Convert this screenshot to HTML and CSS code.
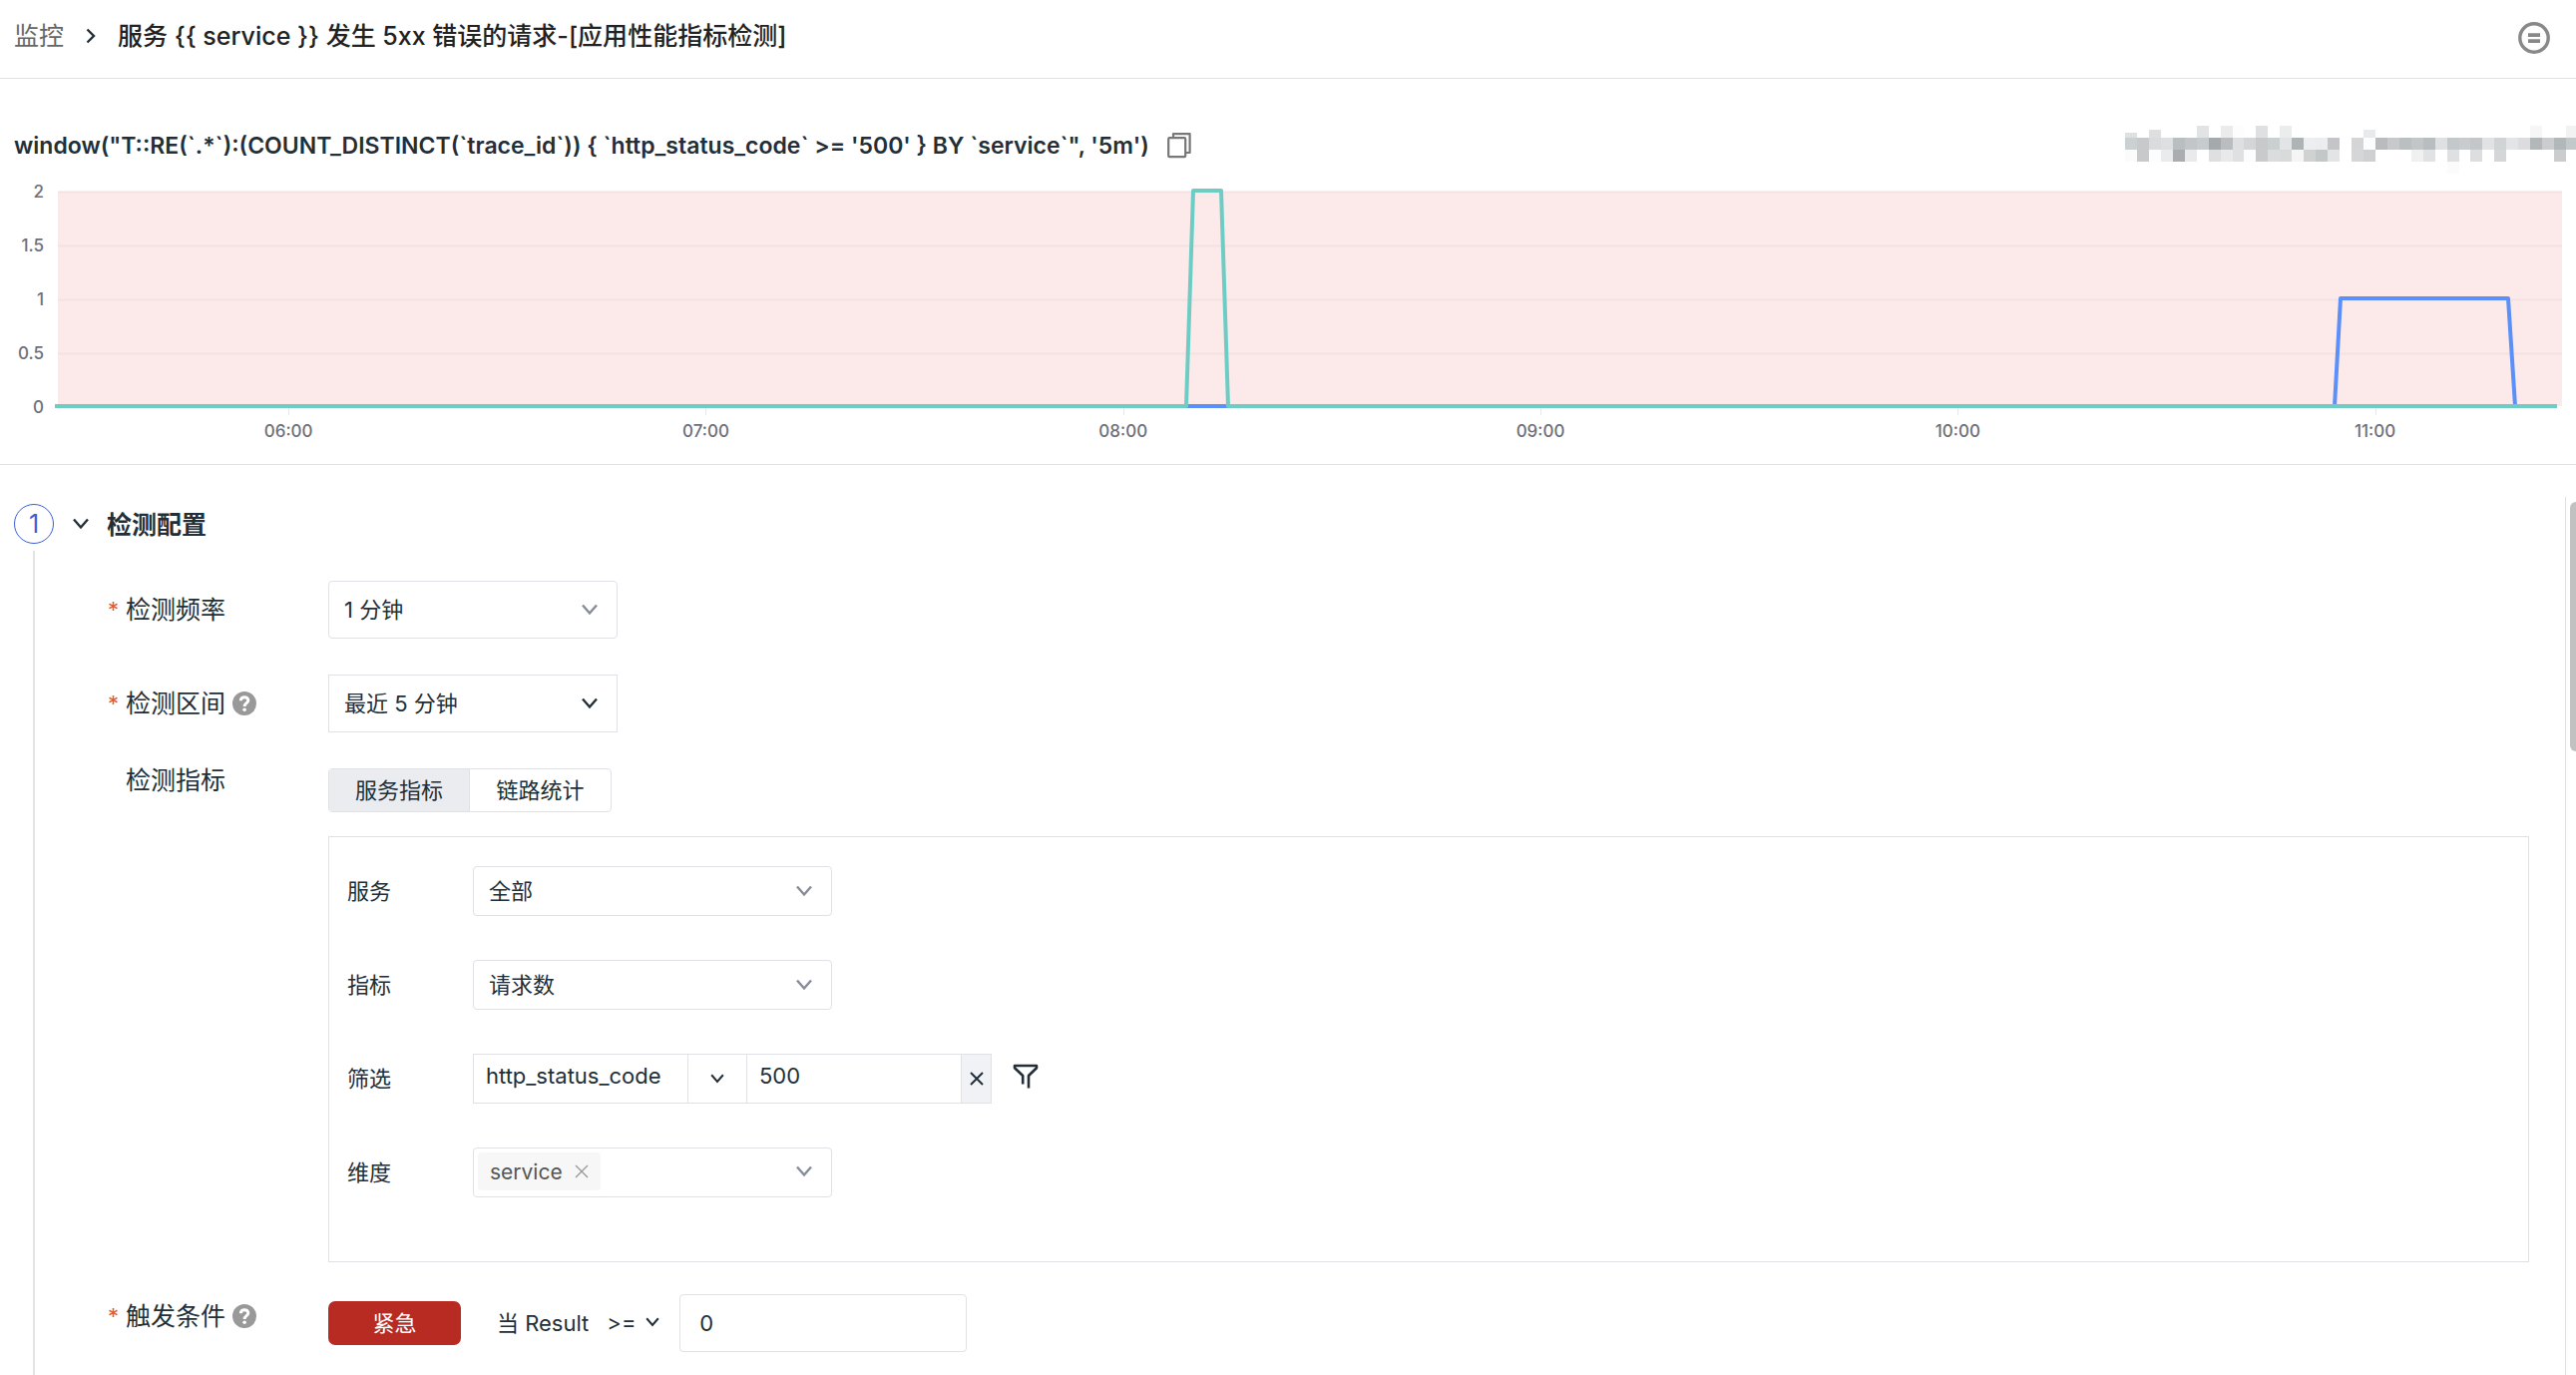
FILE: index.html
```
<!DOCTYPE html>
<html lang="zh-CN">
<head>
    <meta charset="UTF-8">
    <meta name="viewport" content="width=device-width, initial-scale=1.0">
    <title>监控</title>
    <link rel="stylesheet" href="styles.css">
</head>
<body>

<!-- shared icons -->
<svg class="sprite" aria-hidden="true">
    <symbol id="chevron" viewBox="0 0 16 12">
        <path d="M1 1.5 L8 9.5 L15 1.5" fill="none" stroke="currentColor" stroke-width="2.4"/>
    </symbol>
    <symbol id="help" viewBox="0 0 24 24">
        <circle cx="12" cy="12" r="12" fill="#999"/>
        <path d="M8.3 9.2 C8.3 4.4 15.9 4.6 15.8 9 C15.7 11.8 12.1 11.6 12.1 15" fill="none" stroke="#fff" stroke-width="3"/>
        <circle cx="12.1" cy="18.3" r="1.8" fill="#fff"/>
    </symbol>
    <symbol id="cross" viewBox="0 0 14 14">
        <path d="M1 1 L13 13 M13 1 L1 13" fill="none" stroke="currentColor" stroke-width="2"/>
    </symbol>
    <symbol id="cross-thin" viewBox="0 0 14 14">
        <path d="M1 1 L13 13 M13 1 L1 13" fill="none" stroke="currentColor" stroke-width="1.4"/>
    </symbol>
</svg>

<header class="topbar">
    <nav class="breadcrumb">
        <a href="#">监控</a>
        <svg class="breadcrumb-arrow" viewBox="0 0 10 16"><path d="M1.5 1.5 L8 8 L1.5 14.5" fill="none" stroke="currentColor" stroke-width="2.4"/></svg>
        <h1>服务 {{ service }} 发生 5xx 错误的请求-[应用性能指标检测]</h1>
    </nav>
    <button type="button" class="icon-button" aria-label="菜单">
        <svg width="32" height="32" viewBox="0 0 32 32">
            <circle cx="16" cy="16" r="14.2" fill="none" stroke="#888" stroke-width="3.4"/>
            <path d="M10 11.3 H22 V15 H10 Z M10 17.3 H22 V21 H10 Z" fill="#888"/>
        </svg>
    </button>
</header>

<section class="preview">
    <div class="query">
        <code>window("T::RE(`.*`):(COUNT_DISTINCT(`trace_id`)) { `http_status_code` &gt;= '500' } BY `service`", '5m')</code>
        <button type="button" class="icon-button" aria-label="复制">
            <svg width="24" height="26" viewBox="0 0 24 26">
                <g fill="none" stroke="#777" stroke-width="2.2" stroke-linejoin="round">
                    <rect x="1.2" y="5.2" width="17" height="19" rx="1"/>
                    <path d="M6 5 V1.2 H22.6 V20 H18.4"/>
                </g>
            </svg>
        </button>
        <svg class="mosaic" id="mosaic" viewBox="0 0 454 48" preserveAspectRatio="none" shape-rendering="crispEdges"></svg>
    </div>

    <svg class="chart" id="chart">
        <g class="y-axis">
            <text x="44" y="32">2</text>
            <text x="44" y="86">1.5</text>
            <text x="44" y="140">1</text>
            <text x="44" y="194">0.5</text>
            <text x="44" y="248">0</text>
        </g>
        <svg x="0" y="0" width="100%" height="270" viewBox="0 0 2582 270" preserveAspectRatio="none">
            <rect x="58" y="26" width="2510" height="215" class="area"/>
            <path d="M58 26.5 H2568 M58 80.5 H2568 M58 134.5 H2568 M58 188.5 H2568" class="grid"/>
            <path d="M289.5 242 V250 M707.5 242 V250 M1126.5 242 V250 M1544.5 242 V250 M1962.5 242 V250 M2381.5 242 V250" class="tick"/>
            <path d="M55 241 H2340 L2346 133 H2514 L2521 241 H2563" class="line blue"/>
            <path d="M55 241 H1189 L1196 25 H1224 L1231 241 H2563" class="line green"/>
        </svg>
        <g class="x-axis">
            <text x="11.2%" y="272">06:00</text>
            <text x="27.4%" y="272">07:00</text>
            <text x="43.6%" y="272">08:00</text>
            <text x="59.8%" y="272">09:00</text>
            <text x="76%" y="272">10:00</text>
            <text x="92.2%" y="272">11:00</text>
        </g>
    </svg>
</section>

<main class="config">
    <div class="step">
        <div class="rail">
            <span class="step-number">1</span>
            <span class="rail-line"></span>
        </div>

        <form class="step-body">
            <div class="step-title">
                <svg class="chevron"><use href="#chevron"/></svg>
                <h2>检测配置</h2>
            </div>

            <div class="form-row">
                <label for="frequency" class="form-label required">检测频率</label>
                <div class="select select-wide rounded">
                    <select id="frequency"><option>1 分钟</option></select>
                    <svg class="chevron muted"><use href="#chevron"/></svg>
                </div>
            </div>

            <div class="form-row">
                <label for="range" class="form-label required">检测区间<svg class="help"><use href="#help"/></svg></label>
                <div class="select select-wide">
                    <select id="range"><option>最近 5 分钟</option></select>
                    <svg class="chevron"><use href="#chevron"/></svg>
                </div>
            </div>

            <div class="form-row metric-row">
                <span class="form-label">检测指标</span>
                <div class="metric">
                    <div class="tabs">
                        <button type="button" class="active">服务指标</button>
                        <button type="button">链路统计</button>
                    </div>
                    <div class="panel">
                        <div class="panel-row">
                            <label for="service">服务</label>
                            <div class="select rounded">
                                <select id="service"><option>全部</option></select>
                                <svg class="chevron muted"><use href="#chevron"/></svg>
                            </div>
                        </div>
                        <div class="panel-row">
                            <label for="metric">指标</label>
                            <div class="select rounded">
                                <select id="metric"><option>请求数</option></select>
                                <svg class="chevron muted"><use href="#chevron"/></svg>
                            </div>
                        </div>
                        <div class="panel-row">
                            <label for="filterKey">筛选</label>
                            <div class="filter">
                                <input type="text" id="filterKey" value="http_status_code">
                                <button type="button" class="filter-op" aria-label="运算符"><svg class="chevron small"><use href="#chevron"/></svg></button>
                                <input type="text" value="500" aria-label="筛选值">
                                <button type="button" class="filter-remove" aria-label="删除"><svg class="cross"><use href="#cross"/></svg></button>
                            </div>
                            <button type="button" class="icon-button funnel" aria-label="添加筛选">
                                <svg width="26" height="26" viewBox="0 0 26 26">
                                    <path d="M10.2 20.5 V12 L2 4.2 V2 H24 V4.2 L16 12 V24.5" fill="none" stroke="#222f38" stroke-width="2.6" stroke-linejoin="round"/>
                                </svg>
                            </button>
                        </div>
                        <div class="panel-row">
                            <label for="dimension">维度</label>
                            <div class="tag-select">
                                <span class="tag">service<button type="button" aria-label="移除"><svg class="cross"><use href="#cross-thin"/></svg></button></span>
                                <input type="text" id="dimension">
                                <svg class="chevron muted"><use href="#chevron"/></svg>
                            </div>
                        </div>
                    </div>
                </div>
            </div>

            <div class="form-row trigger-row">
                <label for="threshold" class="form-label required">触发条件<svg class="help"><use href="#help"/></svg></label>
                <div class="trigger">
                    <button type="button" class="level">紧急</button>
                    <span class="when">当 Result</span>
                    <div class="operator">
                        <select aria-label="比较"><option>&gt;=</option></select>
                        <svg class="chevron small"><use href="#chevron"/></svg>
                    </div>
                    <input type="text" id="threshold" value="0">
                </div>
            </div>
        </form>
    </div>
    <div class="scroll-thumb"></div>
</main>

<script>
    // masked text, one colour per 12px cell ("-" leaves the cell empty)
    const rows = [
        'dfe0e2 - dedfe1 - - - e2e3e5 - ebebeb fdfdfd - dfe0e2 - ebeded - - - - - - e9eaeb - - - - - - - - - - - - - f6f6f6 - - f2f2f2',
        'cbd0d2 c8c9ca dadbdd dedfe1 b9bec1 c2c6c9 c6cbce a4a9ac b9bdc0 dedfe1 d3d5d6 c8c9ca cacfcf e3e4e6 aeb3b6 edeef0 ecedee c3c5c8 - d4d5d7 fdfdfd b8bcbf c8c9ca babfc2 c3c6c9 b8bdc0 dfe0e2 c3c8cb c8cccf c3c7ca e1e2e4 d0d4d5 e3e4e6 dadcde b2b7ba cbccce b2b7ba c3c8ca',
        'fbfbfb c8c9ca fdfdfd e9ebed a9adb0 e8eaec - dedfe1 e8e9eb dfe0e2 fbfdfd c9cacb dbdcde d8dadc f5f5f5 d0d1d3 c2c7ca e3e4e6 - d5d6d8 cfd0d2 - - - eff1f0 e1e2e4 - dfe0e2 - dcdee0 - d4d6d8 - - - - cbccce',
        '- - - - - - - - - - - - - - - - - - - - - - - - - - - fbfbfb'
    ];
    // cells of the first row that start lower
    const cut = { 0: 7, 2: 4, 20: 4 };

    let cells = '';
    rows.forEach((row, y) => {
        row.split(' ').forEach((color, x) => {
            if (color === '-') return;
            const top = y === 0 ? (cut[x] || 0) : 0;
            cells += `<rect x="${x * 12}" y="${y * 12 + top}" width="12" height="${12 - top}" fill="#${color}"/>`;
        });
    });
    document.getElementById('mosaic').innerHTML = cells;
</script>

</body>
</html>
```
FILE: styles.css
```
* {
    box-sizing: border-box;
}
body {
    margin: 0;
    height: 100vh;
    display: flex;
    flex-direction: column;
    overflow: hidden;
    background: #fff;
    color: #222f38;
    font-family: Inter, "Noto Sans CJK SC", sans-serif;
    font-size: 22px;
}
button, input, select {
    font: inherit;
    color: inherit;
    margin: 0;
    padding: 0;
    border: none;
    border-radius: 0;
    background: none;
    outline: none;
}
button {
    cursor: pointer;
}
select {
    appearance: none;
}
svg {
    display: block;
}
.sprite {
    position: absolute;
    width: 0;
    height: 0;
}
.icon-button {
    display: flex;
}
.chevron {
    width: 16px;
    height: 12px;
    flex: none;
}
.chevron.small {
    width: 14px;
    height: 10px;
}
.chevron.muted {
    color: #868b9b;
}
.cross {
    width: 14px;
    height: 14px;
}

/* top bar */
.topbar {
    flex: none;
    display: flex;
    justify-content: space-between;
    align-items: center;
    height: 79px;
    padding: 0 26px 2px 14px;
    border-bottom: 1px solid #e2e2e4;
}
.breadcrumb {
    display: flex;
    align-items: center;
    padding-bottom: 4px;
    font-size: 25px;
    line-height: 36px;
}
.breadcrumb a {
    color: #666;
    text-decoration: none;
}
.breadcrumb-arrow {
    width: 10px;
    height: 16px;
    margin: 0 22px;
}
.breadcrumb h1 {
    margin: 0;
    font-size: 25px;
    font-weight: 500;
    color: #222;
}

/* query preview */
.preview {
    flex: none;
    padding-top: 47px;
    border-bottom: 1px solid #e0e0e6;
}
.query {
    display: flex;
    align-items: center;
    height: 40px;
    padding-left: 14px;
}
.query code {
    font-family: inherit;
    font-size: 23px;
    font-weight: 600;
    margin-right: 18px;
}
.mosaic {
    width: 452px;
    height: 48px;
    margin: 8px 0 0 auto;
}
.chart {
    width: 100%;
    height: 299px;
    font-size: 17px;
    font-weight: 500;
    fill: #6e7079;
}
.y-axis text {
    text-anchor: end;
}
.x-axis text {
    text-anchor: middle;
}
.area {
    fill: #fceaea;
}
.grid {
    stroke: #f3e1e3;
    stroke-width: 2;
}
.tick {
    stroke: #e8e8ec;
}
.line {
    fill: none;
    stroke-width: 4;
    stroke-linejoin: round;
}
.blue {
    stroke: #5b8ff9;
}
.green {
    stroke: #6dcdc5;
}

/* configuration */
.config {
    position: relative;
    flex: 1;
    min-height: 0;
    padding: 32px 10px 0 0;
}
.step {
    display: flex;
    height: 100%;
    padding: 7px 36px 0 14px;
    border-right: 1px solid #e0e0e4;
}
.rail {
    display: flex;
    flex-direction: column;
    align-items: center;
    gap: 7px;
    width: 40px;
    flex: none;
}
.step-number {
    width: 40px;
    height: 40px;
    flex: none;
    border: 1px solid #3b5fd6;
    border-radius: 50%;
    color: #3b5fd6;
    font-size: 25px;
    line-height: 38px;
    text-align: center;
}
.rail-line {
    flex: 1;
    width: 2px;
    background: #e4e4e6;
}
.step-body {
    flex: 1;
    min-width: 0;
    padding-left: 19px;
}
.step-title {
    display: flex;
    align-items: center;
    gap: 18px;
    height: 40px;
    margin-bottom: 37px;
}
.step-title h2 {
    margin: 0;
    padding-bottom: 3px;
    font-size: 25px;
    font-weight: 600;
}
.form-row {
    display: flex;
    align-items: center;
    padding-left: 34px;
    margin-bottom: 36px;
}
.form-label {
    position: relative;
    display: flex;
    align-items: center;
    gap: 7px;
    width: 222px;
    flex: none;
    padding-left: 19px;
    font-size: 25px;
    line-height: 44px;
}
.required::before {
    content: "*";
    position: absolute;
    left: 1px;
    top: 0;
    color: #e05a35;
    font-size: 22px;
}
.help {
    width: 24px;
    height: 24px;
}
.select {
    position: relative;
    width: 360px;
    height: 50px;
    border: 1px solid #e0e1e6;
}
.rounded {
    border-radius: 4px;
}
.select-wide {
    width: 290px;
    height: 58px;
}
.select select {
    width: 100%;
    height: 100%;
    padding-left: 15px;
}
.select .chevron {
    position: absolute;
    right: 19px;
    top: 50%;
    margin-top: -6px;
    pointer-events: none;
}
.metric-row, .trigger-row {
    align-items: flex-start;
}
.metric-row {
    margin-bottom: 32px;
}
.metric-row > .form-label {
    line-height: 24px;
}
.metric {
    flex: 1;
    min-width: 0;
}
.tabs {
    display: inline-flex;
    height: 44px;
    margin-bottom: 24px;
    border: 1px solid #e0e1e6;
    border-radius: 4px;
    vertical-align: top;
}
.tabs button {
    width: 141px;
    padding-bottom: 4px;
}
.tabs .active {
    background: #ebecf0;
    border-right: 1px solid #e0e1e6;
}
.panel {
    display: flex;
    flex-direction: column;
    gap: 44px;
    padding: 29px 18px 64px;
    border: 1px solid #e0e1e4;
}
.panel-row {
    display: flex;
    align-items: center;
}
.panel-row label {
    width: 126px;
    padding-bottom: 5px;
}
.filter {
    display: flex;
    height: 50px;
    border: 1px solid #e0e1e4;
}
.filter input {
    width: 214px;
    padding: 0 12px 6px;
}
.filter-op, .filter-remove {
    display: flex;
    align-items: center;
    justify-content: center;
}
.filter-op {
    width: 60px;
    border: solid #e0e1e4;
    border-width: 0 1px;
}
.filter-remove {
    width: 30px;
    border-left: 1px solid #e0e1e4;
    background: #f1f2f5;
}
.funnel {
    margin-left: 21px;
    padding-bottom: 4px;
}
.tag-select {
    display: flex;
    align-items: center;
    width: 360px;
    height: 50px;
    padding: 0 19px 2px 4px;
    border: 1px solid #e0e1e4;
    border-radius: 4px;
}
.tag-select input {
    flex: 1;
    min-width: 0;
}
.tag {
    display: flex;
    align-items: center;
    gap: 12px;
    height: 38px;
    padding: 0 12px;
    border-radius: 4px;
    background: #f7f7f7;
    color: #555;
    font-size: 21px;
}
.tag button {
    display: flex;
    color: #999;
}
.trigger {
    display: flex;
    align-items: center;
}
.level {
    width: 133px;
    height: 44px;
    padding-bottom: 4px;
    border-radius: 7px;
    background: #b82b22;
    color: #fff;
}
.when {
    margin-left: 36px;
    padding-bottom: 4px;
}
.operator {
    display: flex;
    align-items: center;
    gap: 9px;
    margin: 0 20px 0 18px;
    padding-bottom: 3px;
}
.trigger input {
    width: 288px;
    height: 58px;
    padding-left: 19px;
    border: 1px solid #e0e1e4;
    border-radius: 4px;
}
.scroll-thumb {
    position: absolute;
    right: 0;
    top: 37px;
    width: 6px;
    height: 250px;
    border-radius: 6px 0 0 6px;
    background: #c1c1c1;
}
```
